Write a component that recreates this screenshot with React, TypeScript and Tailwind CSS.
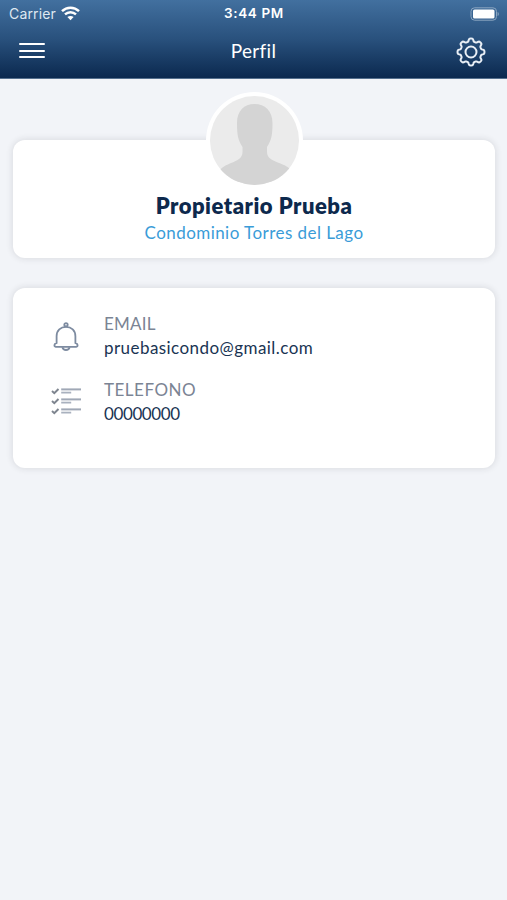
import React from "react";

const gearPath =
  Array.from({ length: 192 }, (_, i) => {
    const a = (i / 192) * Math.PI * 2;
    const r = 12 + 1.5 * Math.tanh(2 * Math.cos(8 * a));
    return `${i ? "L" : "M"}${(15 + r * Math.cos(a)).toFixed(2)} ${(15 + r * Math.sin(a)).toFixed(2)}`;
  }).join("") + "Z";

function Wifi() {
  return (
    <svg className="ml-[5px] h-[15px] w-[19px]" viewBox="0 0 19 15" fill="none" stroke="white" strokeWidth="2.5">
      <path d="M1 5.2C5.8.6 13.2.6 18 5.2" />
      <path d="M4 8.4c3.2-2.9 7.8-2.9 11 0" />
      <path d="M6.4 11 9.5 14.2 12.6 11C10.9 9.5 8.1 9.5 6.4 11Z" fill="white" stroke="none" />
    </svg>
  );
}

function Battery() {
  return (
    <svg className="h-[14px] w-[30px]" viewBox="0 0 30 14">
      <rect x="2" y=".8" width="25.500" height="12.4" rx="3.6" fill="none" stroke="#8ba5c0" />
      <rect x="4" y="2.5" width="21.500" height="9" rx="1.6" fill="white" />
      <path d="M28.6 5v4c1.6-.7 1.6-3.3 0-4Z" fill="#8ba5c0" />
    </svg>
  );
}

function Gear() {
  return (
    <svg className="h-[30px] w-[30px]" viewBox="0 0 30 30" fill="none" stroke="#e9eff6" strokeWidth="2" strokeLinejoin="round">
      <path d={gearPath} />
      <circle cx="15" cy="15" r="5.5" />
    </svg>
  );
}

function Bell() {
  return (
    <svg className="h-[30px] w-[26px]" viewBox="0 0 26 30" fill="none" stroke="#7d8ba0" strokeWidth="1.8" strokeLinejoin="round">
      <circle cx="13" cy="2.8" r="1.7" />
      <path d="M3.6 21.2V14.2C3.6 8.6 7.6 4.9 13 4.9s9.4 3.7 9.4 9.3v7c2.5.3 2.9 3.3.8 3.7H2.8C.7 24.5 1.1 21.5 3.6 21.2Z" />
      <path d="M9.4 25.2c.8 3.7 6.4 3.7 7.2 0" />
    </svg>
  );
}

function Checklist() {
  return (
    <svg className="h-[28px] w-[31px]" viewBox="0 0 31 28" fill="none">
      {[0, 10, 20].map((y) => (
        <g key={y} transform={`translate(0 ${y})`}>
          <path d="m1 4.1 2.300 2.100L7.500 2" stroke="#7e858f" strokeWidth="2" />
          <path d="M10.200 2.400h19.800" stroke="#a0a8b6" strokeWidth="2" />
          <path d="M10.200 5.600h10" stroke="#a9b1be" strokeWidth="1.800" />
        </g>
      ))}
    </svg>
  );
}

export default function App() {
  return (
    <div className="flex h-[900px] w-[507px] flex-col overflow-hidden bg-[#f2f4f8] font-['Lato','Liberation_Sans',sans-serif]">
      <header className="h-[79px] shrink-0 border-b border-[#55708e] bg-linear-to-b from-[#42709f] via-[#29517d] to-[#0b294f] text-white">
        <div className="grid h-[27px] grid-cols-3 items-center pr-[8px] pl-[9px] font-['Inter','Liberation_Sans',sans-serif]">
          <div className="flex items-center text-[14px] text-[#dfe8f1]">
            <span className="tracking-[0.15px]">Carrier</span>
            <Wifi />
          </div>
          <div className="text-center text-[13.500px] font-semibold tracking-[0.65px] whitespace-nowrap">3:44 PM</div>
          <div className="flex justify-end">
            <Battery />
          </div>
        </div>
        <div className="grid h-[49px] grid-cols-3 items-center pr-[21px] pl-[19px]">
          <button className="-mt-[2px] flex w-[26px] flex-col gap-[4.500px]" aria-label="Menu">
            <span className="h-[2px] w-full rounded bg-white" />
            <span className="h-[2px] w-full rounded bg-white" />
            <span className="h-[2px] w-full rounded bg-white" />
          </button>
          <h1 className="pl-[2px] text-center text-[19px] tracking-[0.3px]">Perfil</h1>
          <div className="flex justify-end">
            <Gear />
          </div>
        </div>
      </header>

      <main className="pt-[61px] pr-[12px] pl-[13px]">
        <section className="flex h-[117.500px] flex-col items-center rounded-[12px] bg-white shadow-[0_0_6px_1px_rgba(40,40,50,0.11)]">
          <div className="-mt-[48px] h-[97px] w-[97px] shrink-0 rounded-full bg-white p-[4px]">
            <svg className="h-full w-full rounded-full" viewBox="0 0 89 89">
              <rect width="89" height="89" fill="#ebebeb" />
              <path d="M44.500 8C34 8 27 15 27 27c0 12 1 17 5.500 24v5C32.500 67 17 65 9 75v14h73V75c-8-10-25-8-25-19v-5c4.500-7 5.500-12 5.500-24C62.500 15 55 8 44.500 8Z" fill="#d4d4d4" />
            </svg>
          </div>
          <h2 className="mt-[3px] text-[22px] leading-[28px] font-extrabold tracking-[0.5px] whitespace-nowrap text-[#0d294d]">Propietario Prueba</h2>
          <p className="text-[17px] leading-[26px] tracking-[0.45px] whitespace-nowrap text-[#3a9cd8]">Condominio Torres del Lago</p>
        </section>

        <section className="mt-[30.500px] h-[179.500px] rounded-[12px] bg-white pt-[24px] pl-[38px] shadow-[0_0_6px_1px_rgba(40,40,50,0.11)]">
          <div className="flex h-[65px]">
            <div className="flex w-[53px] pt-[9.500px] pl-[2px]">
              <Bell />
            </div>
            <div className="text-[17px] leading-[24px]">
              <p className="tracking-[0.2px] text-[#7b8494]">EMAIL</p>
              <p className="tracking-[0.440px] text-[#193453]">pruebasicondo@gmail.com</p>
            </div>
          </div>
          <div className="flex">
            <div className="w-[53px] pt-[10px]">
              <Checklist />
            </div>
            <div className="pt-px text-[17px] leading-[23.500px]">
              <p className="tracking-[0.500px] text-[#7b8494]">TELEFONO</p>
              <p className="tracking-[-0.400px] text-[#193453]">00000000</p>
            </div>
          </div>
        </section>
      </main>
    </div>
  );
}
